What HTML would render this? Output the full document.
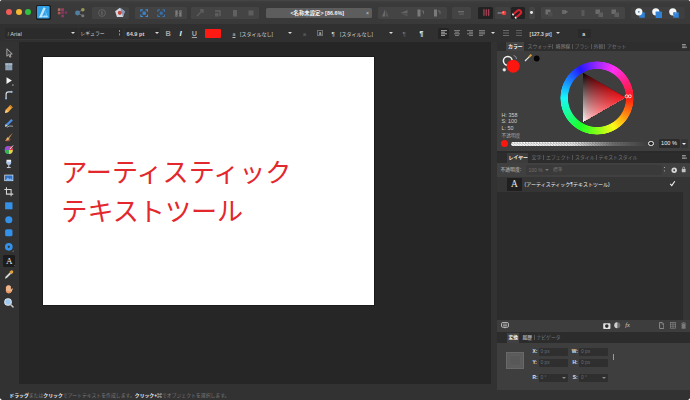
<!DOCTYPE html>
<html lang="ja">
<head>
<meta charset="utf-8">
<title>Affinity Designer</title>
<style>
*{box-sizing:border-box;margin:0;padding:0}
html,body{width:690px;height:400px;overflow:hidden;background:#fff}
body{font-family:"Liberation Sans","Noto Sans CJK JP",sans-serif;color:#d8d8d8;position:relative}
.abs{position:absolute}
#win{position:absolute;left:0;top:0;width:690px;height:400px;background:#262626;border-radius:3px 3px 4px 4px;overflow:hidden}
#titlebar{left:0;top:0;width:690px;height:24px;background:linear-gradient(#484848 0,#3d3d3d 1.6px,#3a3a3a 4px,#393939)}
#ctx{left:0;top:24px;width:690px;height:18px;background:#303030}
#tools{left:0;top:42px;width:18.8px;height:358px;background:#323232}
#status{left:0;top:384px;width:690px;height:16px;background:#323232}
#rightgap{left:490.8px;top:42px;width:7px;height:346px;background:#323232}
#right{left:497.2px;top:42px;width:193px;height:348.2px;background:#3e3e3e}
#rightbot{left:491px;top:390.2px;width:199px;height:10px;background:#323232}
#canvas{left:42.5px;top:57.2px;width:331.5px;height:248.1px;background:#fff;box-shadow:0 0 0 .6px #151515}
.art{left:61.3px;font-size:26.1px;line-height:38px;color:#e2282c;font-weight:400;white-space:nowrap;letter-spacing:0}
.tl{width:6.2px;height:6.2px;border-radius:50%;top:8.9px}
.grp{top:7px;height:11.5px;background:#464646;border-radius:2px}
.tiny{font-size:5px;line-height:6px;white-space:nowrap;color:#cfcfcf}
.tab{font-size:4.9px;line-height:9px;white-space:nowrap;color:#767676;top:0}

.ic{position:absolute}
.tb{position:absolute;top:7px;height:11.5px;background:#434343;border-radius:1.5px}
.tbd{position:absolute;top:6.5px;height:12.5px;background:#222;border-radius:1.5px}
.sep{position:absolute;top:7px;width:.6px;height:11.5px;background:#3a3a3a}
.cx{position:absolute;top:24.8px;height:18px;line-height:18px;font-size:5.3px;color:#d4d4d4;white-space:nowrap}
.fld{position:absolute;background:#2b2b2b;border-radius:1.5px;box-shadow:0 .6px 0 #3e3e3e}
.arr{position:absolute;width:0;height:0;border-left:2.1px solid transparent;border-right:2.1px solid transparent;border-top:2.9px solid #dadada;margin-left:-.2px}
</style>
</head>
<body>
<div id="win">
  <div id="titlebar" class="abs"></div>
  <div id="ctx" class="abs"></div>
  <div id="tools" class="abs"></div>
  <div id="status" class="abs"></div>
  <div id="rightgap" class="abs"></div>
  <div id="right" class="abs"></div>
  <div id="rightbot" class="abs"></div>

  <!-- canvas -->
  <div id="canvas" class="abs"></div>
  <div class="abs art" style="top:154.4px">アーティスティック</div>
  <div class="abs art" style="top:192.5px">テキストツール</div>

  <!-- traffic lights -->
  <div class="abs tl" style="left:6.2px;background:#f25b57"></div>
  <div class="abs tl" style="left:15.6px;background:#f6b82e"></div>
  <div class="abs tl" style="left:24.9px;background:#2fc440"></div>

  <!-- title bar -->
  <div class="abs" style="left:35.5px;top:4.8px;width:15.6px;height:15.4px;background:#1c1c1c;border-radius:2px"></div>
  <svg class="ic" style="left:37px;top:6.2px" width="12.6" height="12.6" viewBox="0 0 24 24">
    <rect width="24" height="24" rx="2.5" fill="#2f9fe6"/>
    <path d="M12.5 2.5 L4 21.5 L9 21.5 L16.5 4.5 Z" fill="#bfe6ff"/>
    <path d="M15 7 L21.5 21.5 L11 21.5 L13 17 L17 17 Z" fill="#6fc4f7"/>
    <path d="M4 21.5 L20 21.5 L20 19 L5 19 Z" fill="#d9f1ff" opacity=".55"/>
  </svg>
  <!-- pixel persona -->
  <svg class="ic" style="left:57.3px;top:7.2px;opacity:.66" width="12" height="11.2" viewBox="0 0 14 13">
    <rect x="1" y="1.5" width="3" height="3" fill="#f08a7a"/><rect x="5" y="1.5" width="3" height="3" fill="#d8457e"/>
    <rect x="1" y="5.5" width="3" height="3" fill="#e9695f"/><rect x="5" y="5" width="3" height="3" fill="#b6326f"/>
    <rect x="9" y="5" width="3" height="3" fill="#a3306d"/><rect x="5" y="9" width="3" height="3" fill="#c23a78"/>
  </svg>
  <!-- export persona -->
  <svg class="ic" style="left:74px;top:6.8px;opacity:.66" width="12.4" height="11.5" viewBox="0 0 14 13">
    <path d="M4 6.5 L10 3 M4 6.5 L10 10" stroke="#8d8d8d" stroke-width="1"/>
    <circle cx="4" cy="6.8" r="2.8" fill="#5fa3d6"/><circle cx="10" cy="3" r="2" fill="#c8c86a"/><circle cx="10" cy="10" r="1.7" fill="#9a9a9a"/>
  </svg>
  <div class="tb" style="left:92px;width:36.5px"></div>
  <svg class="ic" style="left:96.5px;top:8px" width="10" height="10" viewBox="0 0 10 10"><circle cx="5" cy="5" r="3.4" fill="none" stroke="#6a6a6a" stroke-width=".8"/><rect x="4.5" y="3.2" width="1" height="3.8" fill="#727272"/></svg>
  <svg class="ic" style="left:113.6px;top:7.4px;opacity:.88" width="12" height="11" viewBox="0 0 13 12"><path d="M6.5 .8 L11.8 4.6 L9.8 11 L3.2 11 L1.2 4.6 Z" fill="#e9edf4"/><path d="M6.5 .8 L11.8 4.6 L9.8 11 Z" fill="#6a86b8" opacity=".7"/><circle cx="6.3" cy="6.4" r="2.2" fill="#d8483f"/></svg>
  <div class="tb" style="left:135px;width:52px"></div>
  <svg class="ic" style="left:139.5px;top:8.8px" width="8.4" height="8.4" viewBox="0 0 10 10"><path d="M1 3.4V1H3.4M6.6 1H9V3.4M9 6.6V9H6.6M3.4 9H1V6.6" fill="none" stroke="#3f8fd8" stroke-width="1.3"/><rect x="3" y="3" width="4" height="4" fill="#3a80c6"/></svg>
  <svg class="ic" style="left:157px;top:8.8px" width="8.4" height="8.4" viewBox="0 0 10 10"><path d="M1 3.4V1H3.4M6.6 1H9V3.4M9 6.6V9H6.6M3.4 9H1V6.6" fill="none" stroke="#3a7fc4" stroke-width="1.1"/><rect x="3.2" y="3.2" width="3.6" height="3.6" fill="#346fae"/></svg>
  <svg class="ic" style="left:173.5px;top:8.5px" width="9" height="9" viewBox="0 0 10 10"><rect x="1.5" y="1.5" width="2.6" height="7" fill="#7c7c7c"/><rect x="5.8" y="1.5" width="2.6" height="7" fill="#7c7c7c"/><path d="M1 9 L9 1" stroke="#5a5a5a" stroke-width=".8"/></svg>
  <div class="tb" style="left:191px;width:68px;background:#444"></div>
  <svg class="ic" style="left:195px;top:8px" width="10" height="10" viewBox="0 0 10 10"><path d="M2 8 L8 2 M5 2 L8 2 L8 5" stroke="#5f5f5f" stroke-width="1.3" fill="none"/></svg>
  <svg class="ic" style="left:213px;top:8px" width="10" height="10" viewBox="0 0 10 10"><path d="M2 3 L7 3 L7 8" stroke="#626262" stroke-width="1.3" fill="none"/><rect x="2" y="5" width="3.5" height="3.5" fill="#5c5c5c"/></svg>
  <svg class="ic" style="left:230px;top:8px" width="10" height="10" viewBox="0 0 10 10"><rect x="3" y="2" width="4" height="6.5" fill="#606060"/></svg>
  <svg class="ic" style="left:246px;top:8px" width="10" height="10" viewBox="0 0 10 10"><rect x="2.5" y="2.5" width="5" height="5" fill="#5d5d5d"/></svg>
  <!-- title field -->
  <div class="abs" style="left:266px;top:8px;width:106px;height:10.2px;background:#5d5d5d;border-radius:1.5px"></div>
  <div class="abs" style="left:266px;top:8px;width:80px;height:10.2px;line-height:10.2px;font-size:5.4px;font-weight:bold;color:#f2f2f2;text-align:right;white-space:nowrap;padding-right:2px">&lt;名称未設定&gt; [86.6%]</div>
  <div class="abs" style="left:365px;top:10.6px;width:5px;height:5px;font-size:5px;line-height:5px;color:#cfcfcf;text-align:center">×</div>
  <div class="tb" style="left:378px;width:69px;background:#444"></div>
  <svg class="ic" style="left:380px;top:8px" width="10" height="10" viewBox="0 0 10 10"><path d="M5 1.5 L2 8.5 L5 8.5 Z" fill="#6a6a6a"/><path d="M5.6 1.5 L8.6 8.5 L5.6 8.5 Z" fill="#585858"/></svg>
  <svg class="ic" style="left:399px;top:8px" width="10" height="10" viewBox="0 0 10 10"><path d="M1.5 5 L8.5 2 L8.5 5 Z" fill="#656565"/><path d="M1.5 5.6 L8.5 8.6 L8.5 5.6 Z" fill="#555"/></svg>
  <svg class="ic" style="left:414.5px;top:8px" width="10" height="10" viewBox="0 0 10 10"><rect x="2.5" y="1.5" width="3" height="7" fill="#7a7a7a"/><path d="M6.5 3 L8.5 3 L8.5 6" stroke="#6a6a6a" stroke-width="1" fill="none"/></svg>
  <svg class="ic" style="left:431px;top:8px" width="10" height="10" viewBox="0 0 10 10"><rect x="3" y="1.5" width="3" height="7" fill="#7a7a7a"/><path d="M7 3 L9 3 L9 6" stroke="#6a6a6a" stroke-width="1" fill="none"/></svg>
  <div class="tb" style="left:452px;width:18.5px;background:#444"></div>
  <svg class="ic" style="left:456px;top:8px" width="10" height="10" viewBox="0 0 10 10"><rect x="2" y="3" width="6" height="1.4" fill="#6b6b6b"/><rect x="3" y="5.4" width="5" height="1.4" fill="#5c5c5c"/></svg>
  <!-- snapping -->
  <div class="tbd" style="left:477.6px;width:15.8px"></div>
  <svg class="ic" style="left:481.6px;top:8.4px" width="8.6" height="9" viewBox="0 0 10 10"><rect x="1.6" y="1.2" width="1.3" height="7.6" fill="#b54a5c"/><rect x="4.35" y="1.2" width="1.3" height="7.6" fill="#b54a5c"/><rect x="7.1" y="1.2" width="1.3" height="7.6" fill="#b54a5c"/><path d="M1.2 3.4H8.8M1.2 6.2H8.8" stroke="#7a3644" stroke-width=".5"/></svg>
  <div class="tb" style="left:494.6px;width:15.4px;background:#414141"></div>
  <svg class="ic" style="left:496.4px;top:8px" width="12" height="10" viewBox="0 0 12 10"><path d="M1.5 5 L6 5" stroke="#8f9aa0" stroke-width="1.1"/><circle cx="8" cy="5" r="2.3" fill="#ea3d3d"/><circle cx="7.3" cy="4.4" r=".9" fill="#ff9c9c"/></svg>
  <div class="tbd" style="left:511.4px;width:14px"></div>
  <svg class="ic" style="left:512.4px;top:7px" width="12" height="12" viewBox="0 0 12 12"><g transform="rotate(-40 6 6)"><path d="M2 3.9 H7.2 A2.1 2.1 0 0 1 7.2 8.1 H2" fill="none" stroke="#d8222e" stroke-width="2.1"/><path d="M1.2 2.85 V4.95 M1.2 7.05 V9.15" stroke="#ececec" stroke-width="1.5"/></g></svg>
  <div class="tb" style="left:528.5px;width:6.5px;background:#444"></div>
  <div class="abs" style="left:530.3px;top:11.3px;width:2.8px;height:2.8px;border-radius:50%;background:#e6e6e6"></div>
  <div class="tb" style="left:541px;width:84px;background:#444"></div>
  <svg class="ic" style="left:544px;top:8px" width="10" height="10" viewBox="0 0 10 10"><rect x="1.5" y="1.5" width="5" height="5" fill="#6e6e6e"/><rect x="4" y="4" width="4.5" height="4.5" fill="#4d4d4d"/></svg>
  <svg class="ic" style="left:560px;top:8px" width="10" height="10" viewBox="0 0 10 10"><rect x="2" y="2" width="4" height="4" fill="#676767"/><rect x="5" y="3" width="2.5" height="1.6" fill="#727272"/></svg>
  <svg class="ic" style="left:577.5px;top:8px" width="10" height="10" viewBox="0 0 10 10"><rect x="3.5" y="2" width="3" height="6" fill="#595959"/></svg>
  <svg class="ic" style="left:593.5px;top:8px" width="10" height="10" viewBox="0 0 10 10"><rect x="1.5" y="1.5" width="4.5" height="4.5" fill="#6b6b6b"/><rect x="4.5" y="4.5" width="4.5" height="4.5" fill="#5e5e5e"/></svg>
  <svg class="ic" style="left:610px;top:8px" width="10" height="10" viewBox="0 0 10 10"><rect x="1.5" y="1.5" width="4.5" height="4.5" fill="#6b6b6b"/><rect x="4.5" y="4.5" width="4.5" height="4.5" fill="#5e5e5e"/></svg>
  <div class="tb" style="left:631px;width:54px;background:#3f3f3f"></div>
  <svg class="ic" style="left:634px;top:7px" width="12" height="12" viewBox="0 0 12 12"><rect x="5.2" y="5.2" width="5.6" height="5.6" rx=".6" fill="#2f82d6"/><circle cx="4.8" cy="4.8" r="3.6" fill="#f4f6f8"/><circle cx="4.8" cy="4.8" r=".9" fill="#5b84b0"/></svg>
  <svg class="ic" style="left:651px;top:7px" width="12" height="12" viewBox="0 0 12 12"><circle cx="4.8" cy="4.8" r="3.6" fill="#f4f6f8"/><rect x="4.6" y="4.6" width="6.4" height="6.4" rx=".6" fill="#2f82d6"/></svg>
  <svg class="ic" style="left:668px;top:7px" width="12" height="12" viewBox="0 0 12 12"><rect x="5.2" y="5.2" width="5.6" height="5.6" rx=".6" fill="#2f82d6"/><circle cx="4.8" cy="4.8" r="3.6" fill="#f4f6f8"/><rect x="5.2" y="5.2" width="2.6" height="3" fill="#2f82d6"/></svg>

  <!-- context toolbar -->
  <div class="fld" style="left:5px;top:27.5px;width:73px;height:11px"></div>
  <div class="cx" style="left:7.6px;color:#9a9a9a;font-style:italic;font-size:5px">I</div>
  <div class="cx" style="left:10.3px;font-size:5.7px">Arial</div>
  <div class="arr" style="left:71.5px;top:32px"></div>
  <div class="fld" style="left:79px;top:27.5px;width:44px;height:11px"></div>
  <div class="cx" style="left:80.5px;font-size:4.8px">レギュラー</div>
  <div class="abs" style="left:118.8px;top:30.4px;width:1.3px;height:1.3px;background:#8e8e8e;box-shadow:0 3.4px 0 #8e8e8e"></div>
  <div class="fld" style="left:125px;top:27.5px;width:35px;height:11px"></div>
  <div class="cx" style="left:126.6px;font-weight:bold;font-size:5.6px">64.9 pt</div>
  <div class="arr" style="left:155.2px;top:32px"></div>
  <div class="cx" style="left:165.6px;font-weight:bold;font-size:7.4px;color:#a4a4a4">B</div>
  <div class="cx" style="left:179.6px;font-style:italic;font-weight:bold;font-size:8px;color:#ededed">I</div>
  <div class="cx" style="left:191.8px;font-weight:bold;font-size:7.2px;color:#a4a4a4;text-decoration:underline">U</div>
  <div class="abs" style="left:205px;top:28.5px;width:16px;height:9px;background:#fe1a12;border-radius:1px"></div>
  <div class="cx" style="left:232.5px;text-decoration:underline;color:#bdbdbd">a</div>
  <div class="cx" style="left:240px;font-size:5px">[スタイルなし]</div>
  <div class="arr" style="left:288.3px;top:32px"></div>
  <div class="cx" style="left:303px;color:#6d6d6d">a</div>
  <div class="abs" style="left:317.4px;top:29.8px;width:6px;height:6.6px;border:.5px solid #6e6e6e"></div>
  <div class="cx" style="left:318.7px;font-size:4.6px;color:#d4d4d4">a</div>
  <div class="cx" style="left:331.5px;color:#e4e4e4;font-size:6px">¶</div>
  <div class="cx" style="left:340px;font-size:5px">[スタイルなし]</div>
  <div class="arr" style="left:389.3px;top:32px"></div>
  <div class="cx" style="left:402.5px;color:#777;font-size:6px">¶</div>
  <div class="cx" style="left:419.5px;color:#f0f0f0;font-size:7px;font-weight:bold">¶</div>
  <div class="abs" style="left:438px;top:28px;width:11px;height:10.5px;background:#242424;border-radius:1.5px"></div>
  <svg class="ic" style="left:440.6px;top:30px" width="6" height="6" viewBox="0 0 6 6"><path d="M0 .6H6M0 2.2H4M0 3.8H6M0 5.4H4" stroke="#a6a6a6" stroke-width="1"/></svg>
  <svg class="ic" style="left:454px;top:30px" width="6" height="6" viewBox="0 0 6 6"><path d="M0 .6H6M1 2.2H5M0 3.8H6M1 5.4H5" stroke="#868686" stroke-width=".95"/></svg>
  <svg class="ic" style="left:467.3px;top:30px" width="6" height="6" viewBox="0 0 6 6"><path d="M0 .6H6M2 2.2H6M0 3.8H6M2 5.4H6" stroke="#868686" stroke-width=".95"/></svg>
  <svg class="ic" style="left:479px;top:30px" width="6" height="6" viewBox="0 0 6 6"><path d="M0 .6H6M0 2.2H6M0 3.8H6M0 5.4H4" stroke="#868686" stroke-width=".95"/></svg>
  <div class="arr" style="left:491.6px;top:32px"></div>
  <svg class="ic" style="left:502px;top:29px" width="8" height="8" viewBox="0 0 8 8"><path d="M1 1.5H7M1 4H7M1 6.5H7" stroke="#7a7a7a" stroke-width=".8"/></svg>
  <svg class="ic" style="left:515.3px;top:29px" width="8" height="8" viewBox="0 0 8 8"><path d="M1 1.5H7M1 4H7M1 6.5H7" stroke="#6e6e6e" stroke-width=".8"/></svg>
  <div class="cx" style="left:529.6px;font-weight:bold;font-size:5px">[127.3 pt]</div>
  <div class="arr" style="left:556.4px;top:32px"></div>
  <div class="abs" style="left:578px;top:28.5px;width:12.5px;height:9.5px;background:#2a2a2a;border-radius:1.5px"></div>
  <div class="cx" style="left:582.3px;font-weight:bold;color:#dedede">a</div>

  <!-- tools -->
  <svg class="ic" style="left:3.30px;top:47.40px" width="11.6" height="11.6" viewBox="0 0 12 12"><path d="M4 1.8 L4 9.6 L5.9 7.9 L7.1 10.6 L8.3 10 L7.1 7.4 L9.6 7.2 Z" fill="#3a3a3a" stroke="#c9c9c9" stroke-width=".8" stroke-linejoin="round"/></svg>
  <svg class="ic" style="left:3.30px;top:61.25px" width="11.6" height="11.6" viewBox="0 0 12 12"><rect x="2.4" y="2.4" width="7.2" height="7.2" fill="#8fa3b5"/><rect x="2.4" y="2.4" width="7.2" height="1.6" fill="#aebccb"/><path d="M2.4 6H9.6M6 2.4V9.6" stroke="#7b8d9e" stroke-width=".5"/></svg>
  <svg class="ic" style="left:3.30px;top:75.10px" width="11.6" height="11.6" viewBox="0 0 12 12"><path d="M3.6 2.2 L3.6 9.4 L9.2 5.8 Z" fill="#f2f2f2"/><rect x="9.4" y="9.6" width="1.6" height="1.6" fill="#8a8a8a"/></svg>
  <svg class="ic" style="left:3.30px;top:88.95px" width="11.6" height="11.6" viewBox="0 0 12 12"><path d="M3.2 10 L3.2 5.4 Q3.2 3 5.8 3 L8.6 3" fill="none" stroke="#d9dfe6" stroke-width="1.2"/><circle cx="8.9" cy="3" r="1.1" fill="#8fb7e6"/><circle cx="3.2" cy="9.8" r="1" fill="#8fb7e6"/></svg>
  <svg class="ic" style="left:3.30px;top:102.80px" width="11.6" height="11.6" viewBox="0 0 12 12"><path d="M2 10.4 L3 6.6 L7.6 2 L10 4.4 L5.6 9.2 Z" fill="#f0a53a"/><path d="M2 10.4 L3 6.6 L5.6 9.2 Z" fill="#f7d08a"/><path d="M7.6 2 L10 4.4 L9 5.4 L6.6 3 Z" fill="#d07f22"/></svg>
  <svg class="ic" style="left:3.30px;top:116.65px" width="11.6" height="11.6" viewBox="0 0 12 12"><path d="M2 10.2 L2.8 7.6 L8.6 2 L10.2 3.6 L4.6 9.4 Z" fill="#4c8fe0"/><path d="M2 10.2 L2.8 7.6 L4.6 9.4 Z" fill="#e8e2d2"/><path d="M4 10.6 Q7 8.4 10.4 9.6" stroke="#d9d9d9" stroke-width=".7" fill="none"/></svg>
  <svg class="ic" style="left:3.30px;top:130.50px" width="11.6" height="11.6" viewBox="0 0 12 12"><path d="M10.2 1.8 L5.4 6.4 L6.6 7.6 Z" fill="#c9854a"/><path d="M5.2 6.4 L6.8 8 Q5.4 10.4 2 10 Q3.6 9 3.8 7.4 Q4.2 6.4 5.2 6.4Z" fill="#e9b06c"/><path d="M3 10 Q6 10.6 7.6 9" stroke="#e06b4b" stroke-width=".8" fill="none"/></svg>
  <svg class="ic" style="left:3.30px;top:144.35px" width="11.6" height="11.6" viewBox="0 0 12 12"><circle cx="6" cy="6.2" r="4.2" fill="#3b7be0"/><path d="M6 6.2 L6 2 A4.2 4.2 0 0 1 10.2 6.2 Z" fill="#e63c3c"/><path d="M6 6.2 L10.2 6.2 A4.2 4.2 0 0 1 6 10.4 Z" fill="#e9d23a"/><path d="M6 6.2 L6 10.4 A4.2 4.2 0 0 1 1.8 6.2 Z" fill="#39b54a"/><path d="M6 6.2 L1.8 6.2 A4.2 4.2 0 0 1 6 2 Z" fill="#a24bd6"/><path d="M10.4 1.6 L7 5.4" stroke="#e8e8e8" stroke-width="1"/></svg>
  <svg class="ic" style="left:3.30px;top:158.20px" width="11.6" height="11.6" viewBox="0 0 12 12"><path d="M3.6 1.8 L8.4 1.8 L8.4 5 Q8.4 7 6 7 Q3.6 7 3.6 5 Z" fill="#e9eef5"/><rect x="5.5" y="7" width="1" height="2.4" fill="#cfd6df"/><rect x="4" y="9.4" width="4" height="1" fill="#cfd6df"/><path d="M3.6 4 L8.4 4 L8.4 5 Q8.4 7 6 7 Q3.6 7 3.6 5 Z" fill="#a9c6ea"/></svg>
  <svg class="ic" style="left:3.30px;top:172.05px" width="11.6" height="11.6" viewBox="0 0 12 12"><rect x="1.4" y="2.8" width="9.2" height="6.6" fill="#e9eef5"/><rect x="2.1" y="3.5" width="7.8" height="5.2" fill="#2f6fc4"/><path d="M2.1 8.7 L5 5.6 L6.8 7.4 L8 6.4 L9.9 8.7 Z" fill="#7db3ef"/></svg>
  <svg class="ic" style="left:3.30px;top:185.90px" width="11.6" height="11.6" viewBox="0 0 12 12"><path d="M3.6 1.4 V8.4 H10.6 M1.4 3.6 H8.4 V10.6" fill="none" stroke="#d4d4d4" stroke-width="1.1"/></svg>
  <svg class="ic" style="left:3.30px;top:199.75px" width="11.6" height="11.6" viewBox="0 0 12 12"><rect x="2.2" y="2.4" width="7.6" height="7.2" fill="#3391ea"/></svg>
  <svg class="ic" style="left:3.30px;top:213.60px" width="11.6" height="11.6" viewBox="0 0 12 12"><circle cx="6" cy="6" r="3.7" fill="#3391ea"/></svg>
  <svg class="ic" style="left:3.30px;top:227.45px" width="11.6" height="11.6" viewBox="0 0 12 12"><rect x="2.2" y="2.4" width="7.6" height="7.2" rx="1.6" fill="#3391ea"/></svg>
  <svg class="ic" style="left:3.30px;top:241.30px" width="11.6" height="11.6" viewBox="0 0 12 12"><circle cx="6" cy="6" r="2.6" fill="none" stroke="#3391ea" stroke-width="2.8"/><path d="M9.6 11 L11 11 L11 9.6 Z" fill="#8a8a8a"/></svg>
  <div class="abs" style="left:2.9px;top:254.75px;width:12.6px;height:12.2px;background:#1c1c1c;border-radius:1.5px"></div>
  <div class="abs" style="left:2.9px;top:254.75px;width:12.6px;height:12.2px;line-height:12.4px;text-align:center;font-family:'Liberation Serif',serif;font-size:9px;color:#ececec">A</div>
  <div class="abs" style="left:13.7px;top:265.05px;width:0;height:0;border-left:1.6px solid transparent;border-bottom:1.6px solid #8a8a8a"></div>
  <svg class="ic" style="left:3.30px;top:269.00px" width="11.6" height="11.6" viewBox="0 0 12 12"><path d="M2 10 L2.6 8 L7 3.6 L8.4 5 L4 9.4 Z" fill="#d9d9d9"/><path d="M6.6 3.2 L8.2 1.6 Q9.4 1 10.2 1.8 Q11 2.6 10.4 3.8 L8.8 5.4 Z" fill="#e3a53a"/></svg>
  <svg class="ic" style="left:3.30px;top:282.85px" width="11.6" height="11.6" viewBox="0 0 12 12"><path d="M3 6.4 L3 3.6 Q3.6 3 4.2 3.6 L4.2 2.6 Q4.9 2 5.5 2.6 L5.6 2.2 Q6.3 1.7 6.9 2.4 L7 3 Q7.7 2.6 8.2 3.3 L8.2 7 L9.2 5.6 Q10.1 5.4 10.2 6.2 L8.6 9.4 Q8 10.6 6.4 10.6 L5.2 10.6 Q3.6 10.4 3 8.6 Z" fill="#f0b48a"/><path d="M3 8.6 Q3.6 10.4 5.2 10.6 L6.4 10.6 Q8 10.6 8.6 9.4 L9 8.4 Q6 9.6 3 7.6Z" fill="#e6955f"/></svg>
  <svg class="ic" style="left:3.30px;top:296.70px" width="11.6" height="11.6" viewBox="0 0 12 12"><circle cx="5.2" cy="5.2" r="3.4" fill="#9cc8f2" stroke="#dfe6ee" stroke-width="1.1"/><path d="M7.8 7.8 L10.4 10.4" stroke="#c9c9c9" stroke-width="1.5" stroke-linecap="round"/></svg>

  <!-- status -->
  <div class="abs" style="left:9.3px;top:391.5px;height:8px;line-height:8px;font-size:4.87px;color:#787878;white-space:nowrap;letter-spacing:0"><b style="color:#f0f0f0">ドラッグ</b>または<b style="color:#f0f0f0">クリック</b>でアートテキストを作成します。<b style="color:#f0f0f0">クリック+⌘</b>でオブジェクトを選択します。</div>

  <!-- right: colour panel -->
  <div class="abs" style="left:497px;top:42px;width:193px;height:9px;background:#2e2e2e"></div>
  <div class="abs" style="left:506px;top:42px;width:18px;height:9px;background:#434343"></div>
  <div class="abs tab" style="left:508px;top:42px;color:#f4f4f4;font-weight:bold">カラー</div>
  <div class="abs tab" style="left:527.5px;top:42px">スウォッチ</div>
  <div class="abs tab" style="left:555.5px;top:42px;color:#8a8a8a">境界線</div>
  <div class="abs tab" style="left:574.5px;top:42px">ブラシ</div>
  <div class="abs tab" style="left:593.5px;top:42px">外観</div>
  <div class="abs tab" style="left:607px;top:42px">アセット</div>
  <div class="abs" style="left:552.3px;top:44px;width:.5px;height:5px;background:#555"></div>
  <div class="abs" style="left:571.8px;top:44px;width:.5px;height:5px;background:#555"></div>
  <div class="abs" style="left:590.8px;top:44px;width:.5px;height:5px;background:#555"></div>
  <div class="abs" style="left:604.3px;top:44px;width:.5px;height:5px;background:#555"></div>
  <svg class="ic" style="left:681.6px;top:44.4px" width="5.2" height="4.3" viewBox="0 0 6 5"><path d="M0 .6H4.4M0 2.4H4.4M0 4.2H4.4" stroke="#b0b0b0" stroke-width=".9"/><path d="M4.6 3.2 L6 3.2 L5.3 4.6Z" fill="#c9c9c9"/></svg>
  <!-- swatches -->
  <svg class="ic" style="left:499px;top:52px" width="44" height="24" viewBox="0 0 44 24">
    <circle cx="8.8" cy="8.8" r="4.4" fill="none" stroke="#f6f6f6" stroke-width="1.5"/>
    <path d="M14.5 3.4 Q17.4 4 17.6 7" stroke="#9aa3aa" stroke-width=".8" fill="none"/>
    <circle cx="14.2" cy="14.2" r="6.5" fill="#fb1710"/>
    <circle cx="5.3" cy="17.7" r="1.5" fill="#f4f4f4" stroke="#b9b9b9" stroke-width=".5"/>
    <path d="M26 9 L30.4 4.6" stroke="#e6e6e6" stroke-width="1.2"/><path d="M30 5 L32.4 2.6" stroke="#d8a23a" stroke-width="1.8"/>
    <circle cx="37.7" cy="6.5" r="2.9" fill="#050505"/>
  </svg>
  <!-- wheel -->
  <div class="abs" style="left:560px;top:60.5px;width:74px;height:74px;border-radius:50%;background:conic-gradient(from 90deg,#ff1a10,#ff8a10,#fbfb18,#86ff18,#1cff24,#18ff90,#16f8fa,#1888ff,#2418ff,#9a28ff,#ff30f4,#ff2084,#ff1a10);-webkit-mask:radial-gradient(circle closest-side,transparent 77.5%,#000 79.5%,#000 98%,transparent 100%);mask:radial-gradient(circle closest-side,transparent 77.5%,#000 79.5%,#000 98%,transparent 100%)"></div>
  <div class="abs" style="left:582.6px;top:72.6px;width:43.1px;height:49.8px;clip-path:polygon(0 0,100% 50%,0 100%);background:linear-gradient(90deg,rgba(246,20,28,0.000) 0%,rgba(246,20,28,0.224) 10%,rgba(246,20,28,0.351) 20%,rgba(246,20,28,0.457) 30%,rgba(246,20,28,0.551) 40%,rgba(246,20,28,0.637) 50%,rgba(246,20,28,0.717) 60%,rgba(246,20,28,0.793) 70%,rgba(246,20,28,0.865) 80%,rgba(246,20,28,0.934) 90%,rgba(246,20,28,1.000) 100%),conic-gradient(from 240deg at 100% 50%,rgb(255,255,255) 0deg,rgb(230,230,230) 5deg,rgb(208,208,208) 10deg,rgb(187,187,187) 15deg,rgb(166,166,166) 20deg,rgb(147,147,147) 25deg,rgb(128,128,128) 30deg,rgb(108,108,108) 35deg,rgb(89,89,89) 40deg,rgb(68,68,68) 45deg,rgb(47,47,47) 50deg,rgb(25,25,25) 55deg,rgb(0,0,0) 60deg,#000 60deg)"></div>
  <svg class="ic" style="left:560px;top:60px" width="76" height="76" viewBox="0 0 76 76">
    <circle cx="66.6" cy="36.3" r="1.5" fill="none" stroke="#fff" stroke-width=".8"/>
    <circle cx="69.8" cy="36.3" r="1.5" fill="none" stroke="#fff" stroke-width=".8"/>
  </svg>
  <div class="abs tiny" style="left:501.5px;top:111.8px;font-size:5.4px">H: 358</div>
  <div class="abs tiny" style="left:501.5px;top:118px;font-size:5.4px">S: 100</div>
  <div class="abs tiny" style="left:501.5px;top:124.5px;font-size:5.4px">L: 50</div>
  <div class="abs tiny" style="left:501.5px;top:133.3px;font-size:4.7px;color:#a8a8a8">不透明度</div>
  <div class="abs" style="left:501.3px;top:139.9px;width:7px;height:7px;border-radius:50%;background:#fb1710"></div>
  <div class="abs" style="left:511.3px;top:141.6px;width:136px;height:4.2px;border-radius:2px;background:linear-gradient(90deg,rgba(62,62,62,0) 0,rgba(62,62,62,.1) 45%,rgba(62,62,62,.75) 75%,#3e3e3e 100%),repeating-conic-gradient(#fff 0 25%,#bdbdbd 0 50%) 0 0/2.8px 2.8px"></div>
  <div class="abs" style="left:648.4px;top:140.6px;width:5.6px;height:5.6px;border-radius:50%;border:1px solid #f2f2f2;background:#2b2b2b"></div>
  <div class="abs" style="left:658.5px;top:139.4px;width:21px;height:8.4px;background:#2b2b2b;border-radius:1.5px"></div>
  <div class="abs" style="left:658.5px;top:139.4px;width:21px;height:8.4px;line-height:8.4px;font-size:5.6px;color:#f0f0f0;text-align:center;white-space:nowrap">100 %</div>
  <div class="abs" style="left:681px;top:139.4px;width:6.5px;height:8.4px;background:#353535;border-radius:1px"></div>
  <div class="arr" style="left:682.6px;top:142.6px;border-top-color:#f0f0f0"></div>

  <!-- right: layers panel -->
  <div class="abs" style="left:497px;top:151.4px;width:193px;height:1.2px;background:#2a2a2a"></div>
  <div class="abs" style="left:497px;top:152.5px;width:193px;height:10px;background:#2c2c2c"></div>
  <div class="abs" style="left:506.8px;top:152.5px;width:21.4px;height:10px;background:#3c3c3c"></div>
  <div class="abs tab" style="left:508.5px;top:153px;color:#f4f4f4;font-weight:bold">レイヤー</div>
  <div class="abs tab" style="left:531.5px;top:153px">文字</div>
  <div class="abs tab" style="left:546px;top:153px">エフェクト</div>
  <div class="abs tab" style="left:575px;top:153px">スタイル</div>
  <div class="abs tab" style="left:598.5px;top:153px">テキストスタイル</div>
  <div class="abs" style="left:543.3px;top:155px;width:.5px;height:5px;background:#555"></div>
  <div class="abs" style="left:572px;top:155px;width:.5px;height:5px;background:#555"></div>
  <div class="abs" style="left:595.6px;top:155px;width:.5px;height:5px;background:#555"></div>
  <svg class="ic" style="left:681.6px;top:155.2px" width="5.2" height="4.3" viewBox="0 0 6 5"><path d="M0 .6H4.4M0 2.4H4.4M0 4.2H4.4" stroke="#b0b0b0" stroke-width=".9"/><path d="M4.6 3.2 L6 3.2 L5.3 4.6Z" fill="#c9c9c9"/></svg>
  <div class="abs" style="left:497px;top:162.5px;width:193px;height:14px;background:#404040"></div>
  <div class="abs" style="left:526px;top:164.5px;width:136px;height:10px;background:#3a3a3a;border-radius:1.5px"></div>
  <div class="abs tiny" style="left:500.5px;top:166.5px;font-size:4.8px;color:#9a9a9a;font-weight:bold">不透明度:</div>
  <div class="abs tiny" style="left:528.5px;top:166.5px;font-size:5px;color:#707070">100 %</div>
  <div class="arr" style="left:545px;top:168.6px;border-top-color:#777"></div>
  <div class="abs tiny" style="left:553px;top:166.5px;font-size:4.8px;color:#707070">標準</div>
  <div class="abs" style="left:664.2px;top:166.7px;width:1.3px;height:1.3px;background:#a8a8a8;box-shadow:0 3.4px 0 #a8a8a8"></div>
  <svg class="ic" style="left:670.6px;top:166.7px" width="6.4" height="6.4" viewBox="0 0 8 8"><circle cx="4" cy="4" r="3.4" fill="#d6d6d6"/><circle cx="4" cy="4" r="1.2" fill="#404040"/></svg>
  <svg class="ic" style="left:680.8px;top:166px" width="5.4" height="7" viewBox="0 0 7 9"><rect x="1" y="3.8" width="5" height="4.2" rx=".5" fill="#c4c4c4"/><path d="M2.2 4 V2.6 A1.3 1.3 0 0 1 4.8 2.6 V4" stroke="#c4c4c4" stroke-width=".9" fill="none"/></svg>
  <div class="abs" style="left:497px;top:176.5px;width:193px;height:144px;background:#2c2c2c"></div>
  
  <div class="abs" style="left:497px;top:176.6px;width:193px;height:15.2px;background:#353535"></div>
  <div class="abs" style="left:682.6px;top:176.6px;width:7.4px;height:143.7px;background:#353535"></div>
  <div class="abs" style="left:507px;top:177.8px;width:15px;height:13.5px;background:#1f1f1f"></div>
  <div class="abs" style="left:507px;top:177.8px;width:15px;height:13.5px;line-height:13.5px;text-align:center;font-family:'Liberation Serif',serif;font-size:9.4px;color:#e8e8e8">A</div>
  <div class="abs tiny" style="left:524.6px;top:181.2px;font-size:5px;color:#f0f0f0">(アーティスティック¶テキストツール)</div>
  <svg class="ic" style="left:668.5px;top:179.5px" width="7" height="7" viewBox="0 0 7 7"><path d="M1.2 3.8 L2.8 5.6 L5.8 1.2" stroke="#f2f2f2" stroke-width="1.1" fill="none"/></svg>

  <!-- layers bottom toolbar -->
  <div class="abs" style="left:497px;top:320.3px;width:193px;height:11.2px;background:#3d3d3d"></div>
  <svg class="ic" style="left:500.5px;top:322px" width="8" height="7" viewBox="0 0 8 7"><rect x=".6" y=".6" width="6.8" height="4.6" rx="1" fill="none" stroke="#d0d0d0" stroke-width=".9"/><path d="M2 2.2H6M2 3.6H6" stroke="#d0d0d0" stroke-width=".6"/><path d="M3 5.2 L4 6.6 L5 5.2Z" fill="#d0d0d0"/></svg>
  <svg class="ic" style="left:603.3px;top:322.5px" width="7.6" height="6.2" viewBox="0 0 7.6 6.2"><rect x=".2" y=".2" width="7.2" height="5.8" rx=".8" fill="#e2e2e2"/><circle cx="3.8" cy="3.1" r="1.8" fill="#2d2d2d"/></svg>
  <svg class="ic" style="left:614.4px;top:322.3px" width="6.6" height="6.6" viewBox="0 0 6.6 6.6"><circle cx="3.3" cy="3.3" r="3" fill="#6e6e6e"/><path d="M3.3 .3 A3 3 0 0 0 3.3 6.3 Z" fill="#cfcfcf"/></svg>
  <div class="abs" style="left:625.3px;top:320.3px;height:11.2px;line-height:10.6px;font-size:6.4px;font-style:italic;color:#d2d2d2;font-family:'Liberation Serif',serif">fx</div>
  <svg class="ic" style="left:658.8px;top:322px" width="5.4" height="7" viewBox="0 0 5.4 7"><path d="M.6 .5 H3.2 L4.8 2.1 V6.5 H.6 Z" fill="none" stroke="#9a9a9a" stroke-width=".8"/><path d="M3 .5 V2.3 H4.8" fill="none" stroke="#9a9a9a" stroke-width=".5"/></svg>
  <svg class="ic" style="left:669.8px;top:322.2px" width="6" height="6.6" viewBox="0 0 6 6.6"><rect x=".4" y=".4" width="5.2" height="5.8" fill="none" stroke="#868686" stroke-width=".7"/><path d="M3 .4V6.2M.4 2.3H5.6M.4 4.3H5.6" stroke="#868686" stroke-width=".6"/></svg>
  <svg class="ic" style="left:680.8px;top:321.8px" width="5.2" height="7.2" viewBox="0 0 5.2 7.2"><rect x=".6" y="1.9" width="4" height="4.9" rx=".4" fill="#7a7a7a"/><rect x=".1" y=".9" width="5" height=".7" fill="#7a7a7a"/><rect x="1.7" y=".2" width="1.8" height=".8" fill="#7a7a7a"/></svg>

  <!-- transform panel -->
  <div class="abs" style="left:497px;top:331.5px;width:193px;height:11px;background:#2c2c2c"></div>
  <div class="abs" style="left:507.3px;top:333px;width:11.6px;height:9.5px;background:#414141"></div>
  <div class="abs tab" style="left:508.5px;top:333px;color:#f4f4f4;font-weight:bold;font-size:4.8px">変換</div>
  <div class="abs tab" style="left:522.5px;top:333px;color:#a8a8a8;font-size:4.8px;font-weight:bold">履歴</div>
  <div class="abs tab" style="left:536.5px;top:333px;font-size:4.8px">ナビゲータ</div>
  <div class="abs" style="left:534px;top:335.3px;width:.5px;height:5px;background:#555"></div>
  <div class="abs" style="left:506.4px;top:351.8px;width:17.4px;height:17.6px;background:#5b5b5b;box-shadow:inset 0 0 0 .8px #6d6d6d"></div>
  <div class="abs" style="left:510.4px;top:355.9px;width:9.4px;height:9.4px;background:#585858;box-shadow:0 0 0 .4px #626262"></div>
  <div class="abs tiny" style="left:532.5px;top:349.2px;font-size:4.8px;font-weight:bold;color:#e2e2e2">X:</div>
  <div class="abs" style="left:538.5px;top:348.2px;width:29px;height:7.8px;background:#2f2f2f;border-radius:1px"></div>
  <div class="abs tiny" style="left:540.5px;top:349.2px;font-size:4.8px;color:#6e6e6e">0 px</div>
  <div class="abs tiny" style="left:532.5px;top:359.9px;font-size:4.8px;font-weight:bold;color:#e2e2e2">Y:</div>
  <div class="abs" style="left:538.5px;top:358.9px;width:29px;height:7.8px;background:#2f2f2f;border-radius:1px"></div>
  <div class="abs tiny" style="left:540.5px;top:359.9px;font-size:4.8px;color:#6e6e6e">0 px</div>
  <div class="abs tiny" style="left:532.5px;top:374.8px;font-size:4.8px;font-weight:bold;color:#e2e2e2">R:</div>
  <div class="abs" style="left:538.5px;top:373.8px;width:29px;height:7.8px;background:#2f2f2f;border-radius:1px"></div>
  <div class="abs tiny" style="left:540.5px;top:374.8px;font-size:4.8px;color:#6e6e6e">0 °</div>
  <div class="arr" style="left:562.5px;top:376.6px;border-top-color:#8a8a8a"></div>
  <div class="abs tiny" style="left:571.8px;top:349.2px;font-size:4.8px;font-weight:bold;color:#e2e2e2">W:</div>
  <div class="abs" style="left:579px;top:348.2px;width:28.5px;height:7.8px;background:#2f2f2f;border-radius:1px"></div>
  <div class="abs tiny" style="left:581px;top:349.2px;font-size:4.8px;color:#6e6e6e">0 px</div>
  <div class="abs tiny" style="left:572.5px;top:359.9px;font-size:4.8px;font-weight:bold;color:#e2e2e2">H:</div>
  <div class="abs" style="left:579px;top:358.9px;width:28.5px;height:7.8px;background:#2f2f2f;border-radius:1px"></div>
  <div class="abs tiny" style="left:581px;top:359.9px;font-size:4.8px;color:#6e6e6e">0 px</div>
  <div class="abs tiny" style="left:572.8px;top:374.8px;font-size:4.8px;font-weight:bold;color:#e2e2e2">S:</div>
  <div class="abs" style="left:579px;top:373.8px;width:28.5px;height:7.8px;background:#2f2f2f;border-radius:1px"></div>
  <div class="abs tiny" style="left:581px;top:374.8px;font-size:4.8px;color:#6e6e6e">0 °</div>
  <div class="arr" style="left:602.5px;top:376.6px;border-top-color:#8a8a8a"></div>
  <div class="abs" style="left:613px;top:354px;width:1px;height:5.6px;background:#9a9a9a"></div>
</div>
</body>
</html>
